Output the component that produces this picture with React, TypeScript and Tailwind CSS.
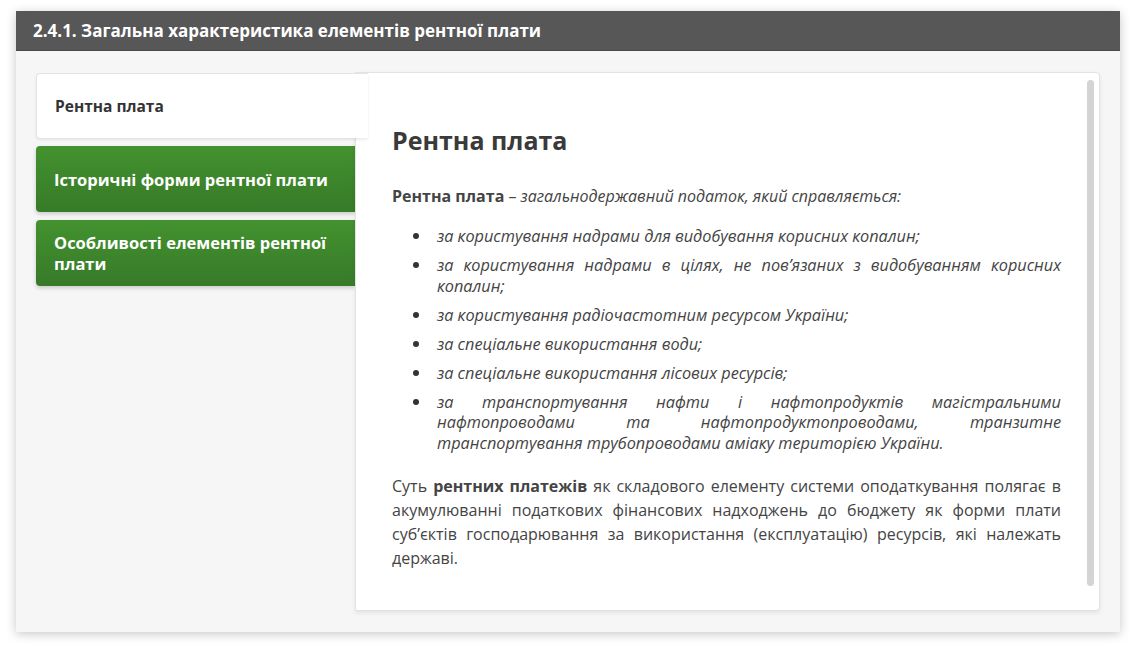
import React from 'react';

const tabs = [
  { title: 'Рентна плата', active: true },
  { title: 'Історичні форми рентної плати', active: false },
  { title: 'Особливості елементів рентної плати', active: false },
];

const items = [
  'за користування надрами для видобування корисних копалин;',
  'за користування надрами в цілях, не пов’язаних з видобуванням корисних копалин;',
  'за користування радіочастотним ресурсом України;',
  'за спеціальне використання води;',
  'за спеціальне використання лісових ресурсів;',
  'за транспортування нафти і нафтопродуктів магістральними нафтопроводами та нафтопродуктопроводами, транзитне транспортування трубопроводами аміаку територією України.',
];

const App: React.FC = () => {
  return (
    <div
      className="min-h-[653px] bg-white pt-[11px] pl-[16px] pr-[16px]"
      style={{ fontFamily: '"Open Sans", "Noto Sans", sans-serif' }}
    >
      <div className="w-[1104px] bg-[#f6f6f6] shadow-[0_2px_10px_rgba(0,0,0,0.22)]">
        {/* Header */}
        <div className="h-[40px] bg-[#575757] flex items-center px-[17px] border-b border-[#4a4a4a]">
          <h2 className="text-white font-bold text-[17px]">
            2.4.1. Загальна характеристика елементів рентної плати
          </h2>
        </div>

        {/* Body */}
        <div className="flex px-[20px] pt-[21px] pb-[21px]">
          {/* Tabs */}
          <div className="w-[319px] flex flex-col gap-[8px] pt-[1px]">
            {tabs.map((tab) =>
              tab.active ? (
                <div
                  key={tab.title}
                  className="relative z-10 h-[65px] w-[332px] bg-white rounded-l-[4px] border-t border-l border-[#e4e4e4] shadow-[0_2px_3px_rgba(0,0,0,0.08)] flex items-center px-[18px]"
                >
                  <span className="font-bold text-[15.5px] text-[#333] pt-[1px]">{tab.title}</span>
                </div>
              ) : (
                <div
                  key={tab.title}
                  className="h-[66px] bg-gradient-to-b from-[#43922f] to-[#377a28] rounded-l-[4px] shadow-[0_2px_4px_rgba(0,0,0,0.18)] flex items-center pl-[18px] pr-[8px]"
                >
                  <span className="font-bold text-[16.5px] leading-[21px] text-white">
                    {tab.title}
                  </span>
                </div>
              )
            )}
          </div>

          {/* Content panel */}
          <div className="flex-1 h-[539px] bg-white border border-[#e2e2e2] rounded-r-[4px] shadow-[0_2px_4px_rgba(0,0,0,0.08)] flex">
            <div className="flex-1 pl-[36px] pr-[26px] pt-[52px] text-[#444]">
              <h1 className="text-[25px] leading-[30px] font-bold text-[#3a3a3a]">Рентна плата</h1>

              <p className="mt-[31px] text-[16px] leading-[21px]">
                <b className="font-bold">Рентна плата</b> –{' '}
                <i>загальнодержавний податок, який справляється:</i>
              </p>

              <ul className="mt-[19px] pl-[21px] italic text-[16.3px] leading-[20.5px] space-y-[8.5px]">
                {items.map((it) => (
                  <li key={it} className="flex items-start">
                    <span className="w-[24px] shrink-0 pt-[7px]">
                      <span className="block w-[6px] h-[6px] rounded-full bg-[#333]" />
                    </span>
                    <span className="flex-1 text-justify">{it}</span>
                  </li>
                ))}
              </ul>

              <p className="mt-[21px] text-[16px] leading-[24px] text-justify">
                Суть <b className="font-bold">рентних платежів</b> як складового елементу системи
                оподаткування полягає в акумулюванні податкових фінансових надходжень до бюджету
                як форми плати суб’єктів господарювання за використання (експлуатацію) ресурсів,
                які належать державі.
              </p>
            </div>
            <div className="w-[7px] mr-[5px] mt-[7px] mb-[24px] bg-[#d4d4d4] rounded-full" />
          </div>
        </div>
      </div>
    </div>
  );
};

export default App;
